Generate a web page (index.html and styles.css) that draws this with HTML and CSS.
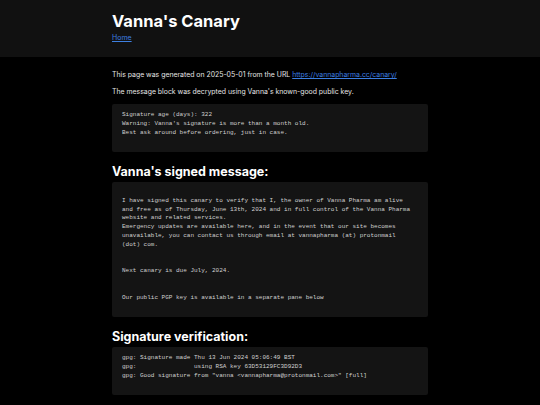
FILE: index.html
```html
<!DOCTYPE html>
<html lang="en">
<head>
<meta charset="utf-8">
<title>Vanna's Canary</title>
<link rel="stylesheet" href="styles.css">
</head>
<body>
<header class="site-header">
  <div class="wrap">
    <h1 class="site-title">Vanna's Canary</h1>
    <a class="nav-link" href="#">Home</a>
  </div>
</header>
<main class="wrap content">
  <p class="note">This page was generated on 2025-05-01 from the URL <a href="#">https://vannapharma.cc/canary/</a></p>
  <p class="note">The message block was decrypted using Vanna's known-good public key.</p>
  <pre class="block">Signature age (days): 322
Warning: Vanna's signature is more than a month old.
Best ask around before ordering, just in case.
&nbsp;</pre>
  <h2 class="section-title">Vanna's signed message:</h2>
  <pre class="block block-message">&nbsp;
I have signed this canary to verify that I, the owner of Vanna Pharma am alive
and free as of Thursday, June 13th, 2024 and in full control of the Vanna Pharma
website and related services.
Emergency updates are available here, and in the event that our site becomes
unavailable, you can contact us through email at vannapharma (at) protonmail
(dot) com.


Next canary is due July, 2024.


Our public PGP key is available in a separate pane below
&nbsp;</pre>
  <h2 class="section-title">Signature verification:</h2>
  <pre class="block">gpg: Signature made Thu 13 Jun 2024 05:06:49 BST
gpg:                using RSA key 63D53129FC3D92D3
gpg: Good signature from "vanna &lt;vannapharma@protonmail.com&gt;" [full]
&nbsp;</pre>
</main>
</body>
</html>
```

FILE: styles.css
```css
html, body {
  margin: 0;
  padding: 0;
  background: #000;
  color: #e4e4e4;
  font-family: Inter, "Liberation Sans", sans-serif;
}

.wrap {
  width: 316px;
  margin: 0 auto;
}

.site-header {
  background: #111111;
  padding: 10px 0 15px;
}

.site-title {
  margin: 0;
  font-size: 16.5px;
  line-height: 22px;
  font-weight: 700;
  color: #ffffff;
}

.nav-link {
  display: block;
  width: max-content;
  margin-top: 1px;
  font-size: 7px;
  line-height: 9px;
  color: #3d7fe0;
}

.content {
  padding-top: 13px;
}

.note {
  margin: 0 0 7px;
  font-size: 6.9px;
  line-height: 10px;
}

.note a {
  color: #3d7fe0;
}

.block {
  margin: 0;
  padding: 6px 10px;
  background: #141414;
  border-radius: 2px;
  font-family: "Liberation Mono", "DejaVu Sans Mono", monospace;
  font-size: 6px;
  line-height: 9px;
  color: #d0d0d0;
  white-space: pre;
}

.block-message {
  line-height: 8.8px;
}

.section-title {
  margin: 11px 0 1px;
  font-size: 12.5px;
  line-height: 18px;
  font-weight: 700;
  color: #ffffff;
}
```
